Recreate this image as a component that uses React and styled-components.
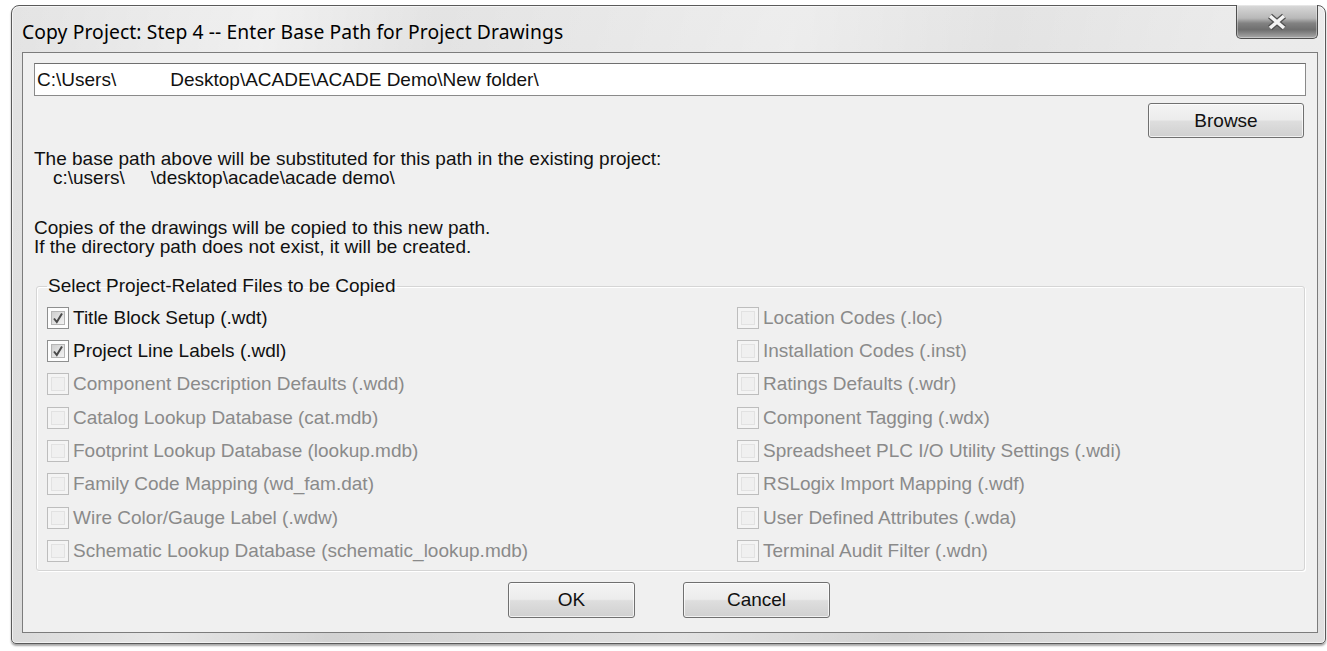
import React from 'react';
import styled, { createGlobalStyle } from 'styled-components';

// === STYLES === //

const GlobalStyle = createGlobalStyle`
  body {
    margin: 0;
    background: #ffffff;
  }
`;

const Page = styled.div`
  width: 1327px;
  height: 651px;
  padding: 5px 0 0 11px;
  box-sizing: border-box;
  overflow: hidden;
`;

const Window = styled.div`
  width: 1315px;
  height: 639px;
  box-sizing: border-box;
  display: flex;
  flex-direction: column;
  padding: 0 7px 10px 10px;
  border: 1px solid #5a5a5a;
  border-radius: 8px 8px 5px 5px;
  background:
    linear-gradient(100deg, rgba(255,255,255,0) 0%, rgba(255,255,255,0.45) 18%, rgba(255,255,255,0) 30%, rgba(255,255,255,0.35) 55%, rgba(255,255,255,0) 70%, rgba(255,255,255,0.3) 88%),
    linear-gradient(#e4e4e4, #d2d2d2);
  box-shadow: inset 0 0 0 1px rgba(255,255,255,0.6), 0 2px 2px rgba(0,0,0,0.35);
  font-family: "Liberation Sans", Arial, sans-serif;
`;

const TitleBar = styled.div`
  height: 46px;
  display: flex;
  align-items: flex-start;
  justify-content: space-between;
`;

const TitleText = styled.div`
  font-family: "Noto Sans", "Open Sans", sans-serif;
  font-size: 19.3px;
  color: #000;
  padding-top: 12px;
  letter-spacing: 0.1px;
`;

const CloseButton = styled.div`
  width: 82px;
  height: 34px;
  margin-top: -1px;
  box-sizing: border-box;
  border: 1px solid #4e4e4e;
  border-top: none;
  border-radius: 0 0 5px 5px;
  background: linear-gradient(#dadada 0%, #b8b8b8 40%, #828282 55%, #6e6e6e 75%, #a9a9a9 100%);
  box-shadow: inset 0 0 0 1px rgba(255,255,255,0.35);
  display: flex;
  align-items: center;
  justify-content: center;
`;

const Client = styled.div`
  flex: 1;
  border: 1px solid #7c7c7c;
  background: #f0f0f0;
  padding: 10px 11px 0 11px;
  display: flex;
  flex-direction: column;
  font-size: 19px;
  color: #111;
`;

const PathField = styled.div`
  height: 33px;
  box-sizing: border-box;
  border: 1px solid #8a8a8a;
  border-top-color: #6f6f6f;
  background: #fff;
  display: flex;
  align-items: center;
  padding-left: 2px;
  white-space: pre;
`;

const Gap = styled.span`
  display: inline-block;
  width: ${(props) => props.w}px;
`;

const BrowseRow = styled.div`
  display: flex;
  justify-content: flex-end;
  margin-top: 7px;
  padding-right: 2px;
`;

const Button = styled.div`
  width: ${(props) => props.w}px;
  height: ${(props) => props.h}px;
  box-sizing: border-box;
  border: 1px solid #707070;
  border-radius: 3px;
  background: linear-gradient(#f4f4f4 0%, #ececec 48%, #dedede 52%, #d0d0d0 100%);
  box-shadow: inset 0 0 0 1px rgba(255,255,255,0.7);
  display: flex;
  align-items: center;
  justify-content: center;
  color: #111;
`;

const Para = styled.div`
  margin-top: ${(props) => props.top}px;
  line-height: 19px;
`;

const Indented = styled.div`
  padding-left: 19px;
  white-space: pre;
`;

const Group = styled.fieldset`
  margin: 20px 1px 0 2px;
  padding: 5px 10px 2px 10px;
  border: 1px solid #d5d5d5;
  border-radius: 3px;
  box-shadow: inset 1px 1px 0 #fff, 1px 1px 0 #fff;
`;

const Legend = styled.legend`
  padding: 0 2px 0 1px;
  line-height: 20px;
  color: #111;
`;

const Options = styled.div`
  display: grid;
  grid-template-columns: 690px 1fr;
  grid-auto-flow: column;
  grid-template-rows: repeat(8, 33.33px);
`;

const Option = styled.div`
  display: flex;
  align-items: center;
  gap: 4px;
  color: ${(props) => (props.disabled ? '#8a8a8a' : '#111')};
`;

const Box = styled.div`
  width: 22px;
  height: 22px;
  box-sizing: border-box;
  border: 1px solid ${(props) => (props.disabled ? '#bdbdbd' : '#8e8f8f')};
  background: ${(props) => (props.disabled ? '#f4f4f4' : '#fdfdfd')};
  padding: 3px;
  display: flex;
`;

const BoxInner = styled.div`
  flex: 1;
  border: 1px solid ${(props) => (props.disabled ? '#e2e2e2' : '#b5b5b5')};
  background: ${(props) =>
    props.disabled ? '#f0f0f0' : 'linear-gradient(135deg, #cfcfcf, #f2f2f2)'};
  display: flex;
  align-items: center;
  justify-content: center;
`;

const ButtonRow = styled.div`
  display: flex;
  justify-content: center;
  gap: 48px;
  margin-top: 11px;
  padding-right: 2px;
`;

// === DATA === //

const leftOptions = [
  { label: 'Title Block Setup (.wdt)', checked: true },
  { label: 'Project Line Labels (.wdl)', checked: true },
  { label: 'Component Description Defaults (.wdd)' },
  { label: 'Catalog Lookup Database (cat.mdb)' },
  { label: 'Footprint Lookup Database (lookup.mdb)' },
  { label: 'Family Code Mapping (wd_fam.dat)' },
  { label: 'Wire Color/Gauge Label (.wdw)' },
  { label: 'Schematic Lookup Database (schematic_lookup.mdb)' }
];

const rightOptions = [
  { label: 'Location Codes (.loc)' },
  { label: 'Installation Codes (.inst)' },
  { label: 'Ratings Defaults (.wdr)' },
  { label: 'Component Tagging (.wdx)' },
  { label: 'Spreadsheet PLC I/O Utility Settings (.wdi)' },
  { label: 'RSLogix Import Mapping (.wdf)' },
  { label: 'User Defined Attributes (.wda)' },
  { label: 'Terminal Audit Filter (.wdn)' }
];

// === COMPONENTS === //

const CloseIcon = () => (
  <svg width="22" height="18" viewBox="0 0 22 18">
    <g strokeLinecap="butt">
      <path d="M4 3 L18 15 M18 3 L4 15" stroke="#505050" strokeWidth="6" />
      <path d="M4 3 L18 15 M18 3 L4 15" stroke="#f4f4f4" strokeWidth="3.6" />
    </g>
  </svg>
);

const CheckBox = ({ checked, disabled }) => (
  <Box disabled={disabled}>
    <BoxInner disabled={disabled}>
      {checked && (
        <svg width="12" height="12" viewBox="0 0 12 12">
          <path d="M2 6.5 L4.8 10 L10 1.5" fill="none" stroke="#4a4a4a" strokeWidth="2" />
        </svg>
      )}
    </BoxInner>
  </Box>
);

const OptionItem = ({ label, checked }) => (
  <Option disabled={!checked}>
    <CheckBox checked={checked} disabled={!checked} />
    <span>{label}</span>
  </Option>
);

export default function App() {
  return (
    <Page>
      <GlobalStyle />
      <Window>
        <TitleBar>
          <TitleText>Copy Project: Step 4 -- Enter Base Path for Project Drawings</TitleText>
          <CloseButton>
            <CloseIcon />
          </CloseButton>
        </TitleBar>
        <Client>
          <PathField>
            C:\Users\<Gap w={54} />Desktop\ACADE\ACADE Demo\New folder\
          </PathField>
          <BrowseRow>
            <Button w={156} h={35}>Browse</Button>
          </BrowseRow>
          <Para top={11}>
            <div>The base path above will be substituted for this path in the existing project:</div>
            <Indented>c:\users\<Gap w={26} />\desktop\acade\acade demo\</Indented>
          </Para>
          <Para top={31}>
            <div>Copies of the drawings will be copied to this new path.</div>
            <div>If the directory path does not exist, it will be created.</div>
          </Para>
          <Group>
            <Legend>Select Project-Related Files to be Copied</Legend>
            <Options>
              {leftOptions.concat(rightOptions).map((opt) => (
                <OptionItem key={opt.label} label={opt.label} checked={opt.checked} />
              ))}
            </Options>
          </Group>
          <ButtonRow>
            <Button w={127} h={36}>OK</Button>
            <Button w={147} h={36}>Cancel</Button>
          </ButtonRow>
        </Client>
      </Window>
    </Page>
  );
}
